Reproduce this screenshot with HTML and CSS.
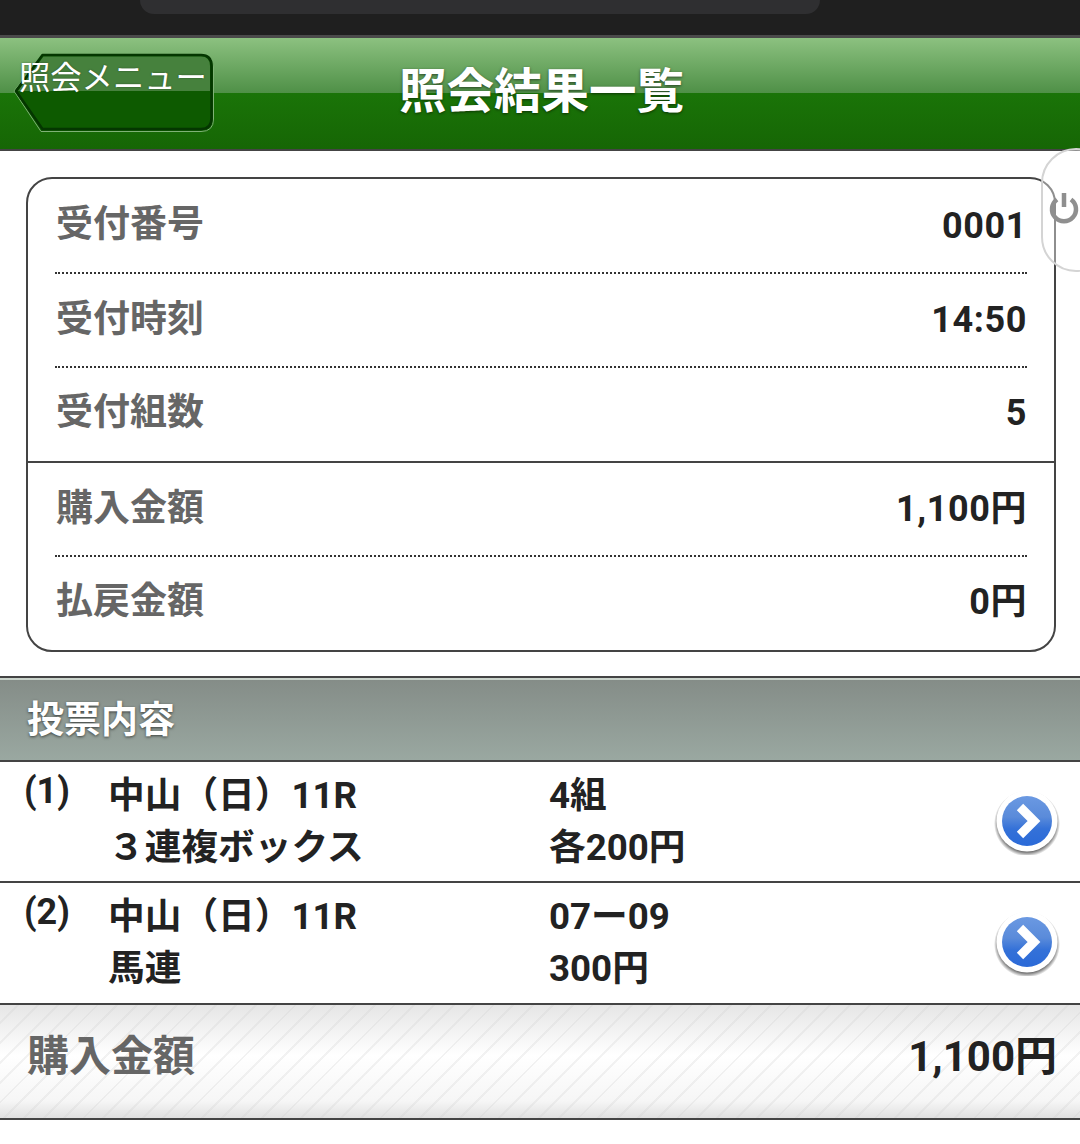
FILE: index.html
```html
<!DOCTYPE html>
<html lang="ja">
<head>
<meta charset="utf-8">
<title>照会結果一覧</title>
<link rel="stylesheet" href="styles.css">
</head>
<body>
<div class="status"><div class="pill"></div></div>
<header class="head">
  <a class="back">
    <svg class="back-shape" viewBox="0 0 202 80" width="202" height="80" aria-hidden="true">
      <path d="M1 38 L28 78.500 H188 Q200.500 78.500 200.500 66 V14 Q200.500 1.500 188 1.500 H30 Z" fill="#0d5a00" stroke="#7fb276" stroke-width="1"/>
      <path d="M3 38 L29.500 76 H188 Q198.500 76 198.500 65 V13 Q198.500 2 188 2 H29.500 Z" fill="#0d5a00" stroke="#043600" stroke-width="2.500" stroke-linejoin="round"/>
      <path d="M5 38 L30.500 3.500 H188 Q197 3.500 197 13 V38 Z" fill="#fff" fill-opacity=".24"/>
    </svg>
    <span class="back-label">照会メニュー</span>
  </a>
  <h1 class="title">照会結果一覧</h1>
</header>
<main>
  <section class="box">
    <div class="row dotted"><span class="label">受付番号</span><span class="value">0001</span></div>
    <div class="row dotted"><span class="label">受付時刻</span><span class="value">14:50</span></div>
    <div class="row solid"><span class="label">受付組数</span><span class="value">5</span></div>
    <div class="row dotted"><span class="label">購入金額</span><span class="value">1,100円</span></div>
    <div class="row last"><span class="label">払戻金額</span><span class="value">0円</span></div>
  </section>
  <h2 class="section">投票内容</h2>
  <div class="bet">
    <span class="num">(1)</span>
    <div class="race"><div>中山（日）11R</div><div>３連複ボックス</div></div>
    <div class="amount"><div>4組</div><div>各200円</div></div>
    <svg class="go" viewBox="0 0 66 66" width="66" height="66" aria-hidden="true">
      <use href="#go-icon"/>
    </svg>
  </div>
  <div class="bet">
    <span class="num">(2)</span>
    <div class="race"><div>中山（日）11R</div><div>馬連</div></div>
    <div class="amount"><div>07ー09</div><div>300円</div></div>
    <svg class="go" viewBox="0 0 66 66" width="66" height="66" aria-hidden="true">
      <use href="#go-icon"/>
    </svg>
  </div>
  <div class="total"><span class="total-label">購入金額</span><span class="total-value">1,100円</span></div>
</main>
<div class="power">
  <svg viewBox="0 0 30 32" width="30" height="32" aria-hidden="true">
    <path d="M8 7.500 A12 12 0 1 0 22 7.500" fill="none" stroke="#8f8f8f" stroke-width="4.500"/>
    <path d="M15 1 V15" fill="none" stroke="#8f8f8f" stroke-width="4.500"/>
  </svg>
</div>
<svg class="defs" width="0" height="0" aria-hidden="true">
  <defs>
    <radialGradient id="go-shadow" cx="50%" cy="50%" r="50%">
      <stop offset="86%" stop-color="#000" stop-opacity=".55"/>
      <stop offset="100%" stop-color="#000" stop-opacity="0"/>
    </radialGradient>
    <linearGradient id="go-fill" x1="0" y1="0" x2="0" y2="1">
      <stop offset="0" stop-color="#6b99e2"/>
      <stop offset=".42" stop-color="#5a8bda"/>
      <stop offset=".66" stop-color="#3471d8"/>
      <stop offset="1" stop-color="#2b6ad8"/>
    </linearGradient>
    <g id="go-icon">
      <circle cx="33" cy="34.500" r="33" fill="url(#go-shadow)"/>
      <circle cx="33" cy="32" r="30.500" fill="#fff"/>
      <circle cx="33" cy="32" r="25" fill="url(#go-fill)"/>
      <path d="M26 18 L40 32 L26 46" fill="none" stroke="#fff" stroke-width="9"/>
    </g>
  </defs>
</svg>
</body>
</html>
```
FILE: styles.css
```css
* { box-sizing: border-box; }
html, body { margin: 0; padding: 0; }
body {
  width: 1080px;
  height: 1144px;
  overflow: hidden;
  position: relative;
  background: #fff;
  color: #222;
  font-family: Roboto, "Noto Sans CJK JP", sans-serif;
}
.status {
  height: 38px;
  background: #1f1f1f;
  border-bottom: 3px solid #4a4a4a;
}
.pill {
  width: 680px;
  height: 14px;
  margin-left: 140px;
  background: #2f2f31;
  border-radius: 0 0 32px 32px;
}
.head {
  height: 113px;
  position: relative;
  background: linear-gradient(#8cc180 0, #4f9047 55px, #1a7408 55px, #166605 100%);
  border-bottom: 2px solid #444;
  display: flex;
  justify-content: center;
  align-items: center;
}
.back {
  position: absolute;
  left: 13px;
  top: 15px;
  width: 202px;
  height: 80px;
}
.back-shape { display: block; }
.back-label {
  position: absolute;
  left: 6px;
  top: 1px;
  font-size: 31.300px;
  line-height: 50px;
  color: #fff;
  white-space: nowrap;
  text-shadow: 0 0 2px rgba(0,0,0,.4);
}
.title {
  margin: -4px 0 0 3px;
  font-size: 47.500px;
  line-height: 60px;
  font-weight: 700;
  color: #fff;
  text-shadow: 0 1px 3px rgba(0,0,0,.55);
}
.box {
  margin: 26px 24px 0 26px;
  height: 475px;
  border: 2px solid #444;
  border-radius: 26px;
  background: #fff;
}
.row {
  height: 94.500px;
  margin: 0 27px;
  padding-top: 1px;
  display: flex;
  justify-content: space-between;
  align-items: center;
  font-weight: 700;
  line-height: 40px;
}
.row.dotted { border-bottom: 2px dotted #333; }
.row.solid { margin: 0; padding: 0 27px 2px; border-bottom: 2px solid #444; }
.row.last { padding: 0 0 4px; }
.label { font-size: 37px; color: #666; margin: 0 0 1px 1px; }
.value { font-size: 36px; color: #222; letter-spacing: .6px; }
.section {
  margin: 24px 0 0;
  height: 86px;
  padding: 3px 0 0 27px;
  display: flex;
  align-items: center;
  font-size: 37px;
  line-height: 44px;
  font-weight: 700;
  color: #fff;
  text-shadow: 0 1px 3px rgba(0,0,0,.6);
  background: linear-gradient(#848c87, #9aa8a1);
  border-top: 2px solid #444;
  border-bottom: 2px solid #444;
  box-shadow: inset 0 2px 0 #c9d3cb;
}
.bet {
  height: 121px;
  display: flex;
  align-items: flex-start;
  position: relative;
  padding: 8px 0 0 24px;
  border-bottom: 2px solid #444;
  font-size: 36.700px;
  font-weight: 700;
  line-height: 51.500px;
}
.bet + .bet { height: 122px; }
.num { width: 84px; margin-top: -4px; font-size: 36px; }
.race { width: 441px; }
.go { position: absolute; right: 20px; top: 27px; }
.total {
  height: 114.500px;
  padding: 0 23px 8px 27px;
  display: flex;
  justify-content: space-between;
  align-items: center;
  font-weight: 700;
  font-size: 42px;
  line-height: 50px;
  border-bottom: 2px solid #444;
  background:
    repeating-linear-gradient(135deg, rgba(255,255,255,0) 0 12px, rgba(205,205,205,.25) 12px 14px),
    linear-gradient(#e6e6e6, #fff 45%, #f6f6f6 85%, #e0e0e0);
}
.total-label { color: #666; }
.total-value { color: #222; }
.power {
  position: absolute;
  left: 1041px;
  top: 148px;
  width: 70px;
  height: 124px;
  padding: 42px 0 0 6px;
  border: 2px solid #d4d4d4;
  border-radius: 40px;
  background: rgba(255,255,255,.4);
}
.power svg { display: block; }
.defs { position: absolute; }
```
